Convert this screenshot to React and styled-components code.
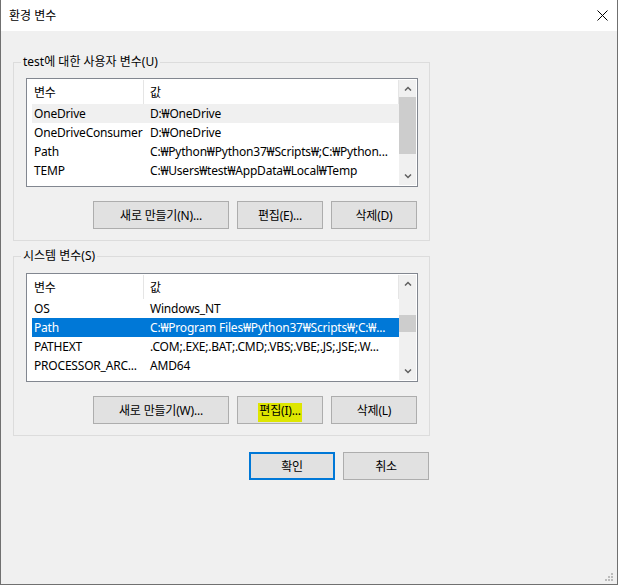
import React from "react";
import styled, { createGlobalStyle } from "styled-components";

const GlobalStyle = createGlobalStyle`
  html, body { margin: 0; padding: 0; background: #f0f0f0; }
  body {
    font-family: "Noto Sans", "Noto Sans CJK KR", sans-serif;
    font-size: 12px;
    color: #000;
  }
  * { box-sizing: border-box; }
`;

const Window = styled.div`
  position: relative;
  width: 618px;
  height: 585px;
  background: #f0f0f0;
  border-left: 1px solid #707070;
  border-right: 1px solid #707070;
  border-bottom: 1px solid #707070;
  display: flex;
  flex-direction: column;
  overflow: hidden;
`;

const TitleBar = styled.div`
  height: 31px;
  flex: none;
  background: #fff;
  display: flex;
  align-items: center;
  justify-content: space-between;
  padding: 0 9px 0 8px;
`;

const Title = styled.span`
  font-size: 12px;
  line-height: 16px;
`;

const Content = styled.div`
  display: flex;
  flex-direction: column;
  padding-left: 12px;
`;

const Group = styled.div`
  position: relative;
  width: 417px;
  margin-top: ${(p) => p.$mt}px;
  border: 1px solid #dcdcdc;
  padding: ${(p) => p.$pt}px 11px 11px 12px;
  display: flex;
  flex-direction: column;
`;

const GroupLabel = styled.span`
  position: absolute;
  top: -9px;
  left: 7px;
  padding: 0 2px;
  background: #f0f0f0;
  line-height: 16px;
  white-space: nowrap;
`;

const ListBox = styled.div`
  height: 109px;
  border: 1px solid #828790;
  background: #fff;
  padding: 1px;
  display: flex;
`;

const TableArea = styled.div`
  flex: 1;
  min-width: 0;
  padding-left: 4px;
  overflow: hidden;
  letter-spacing: -0.2px;
`;

const HeaderRow = styled.div`
  display: flex;
  height: 24px;
  align-items: stretch;
`;

const HeaderCell = styled.div`
  width: ${(p) => p.$w}px;
  flex: none;
  border-right: 1px solid #e5e5e5;
  padding-left: ${(p) => p.$pl}px;
  display: flex;
  align-items: center;
  white-space: nowrap;
`;

const Row = styled.div`
  display: flex;
  height: 19px;
  align-items: center;
  background: ${(p) => (p.$sel ? "#0078d7" : p.$hover ? "#f0f0f0" : "transparent")};
  color: ${(p) => (p.$sel ? "#fff" : "#000")};
`;

const Cell = styled.div`
  width: ${(p) => p.$w}px;
  flex: none;
  padding-left: ${(p) => p.$pl}px;
  white-space: nowrap;
  overflow: hidden;
  line-height: 19px;
`;

const ScrollBar = styled.div`
  width: 17px;
  flex: none;
  background: #f0f0f0;
  display: flex;
  flex-direction: column;
`;

const ScrollBtn = styled.div`
  height: 17px;
  flex: none;
  display: flex;
  align-items: center;
  justify-content: center;
`;

const Track = styled.div`
  flex: 1;
  display: flex;
  flex-direction: column;
`;

const Thumb = styled.div`
  margin-top: ${(p) => p.$top}px;
  height: ${(p) => p.$h}px;
  background: #cdcdcd;
`;

const ButtonRow = styled.div`
  display: flex;
  justify-content: flex-end;
  gap: 8px;
  margin-top: 14px;
  padding-right: 1px;
`;

const Button = styled.button`
  width: ${(p) => p.$w}px;
  height: 28px;
  flex: none;
  background: #e1e1e1;
  border: ${(p) => (p.$default ? "2px solid #0078d7" : "1px solid #adadad")};
  font-family: "Noto Sans", "Noto Sans CJK KR", sans-serif;
  font-size: 12px;
  letter-spacing: -0.2px;
  color: #000;
  padding: 0;
  display: flex;
  align-items: center;
  justify-content: center;
  white-space: nowrap;
`;

const Mark = styled.span`
  background: #dee600;
  padding: 1px 1px 4px 1px;
  margin-top: 5px;
  line-height: 14px;
`;

const DialogButtons = styled.div`
  width: 417px;
  display: flex;
  justify-content: flex-end;
  gap: 8px;
  margin-top: 16px;
  padding-right: 1px;
`;

const Grip = styled.svg`
  position: absolute;
  right: 3px;
  bottom: 2px;
`;

const Chevron = ({ up }) => (
  <svg width="8" height="5" viewBox="0 0 8 5">
    <polyline
      points={up ? "1,4.5 4,1.5 7,4.5" : "1,0.5 4,3.5 7,0.5"}
      fill="none"
      stroke="#606060"
      strokeWidth="1.5"
    />
  </svg>
);

const CloseIcon = () => (
  <svg width="11" height="11" viewBox="0 0 11 11">
    <path d="M0.5 0.5 L10.5 10.5 M10.5 0.5 L0.5 10.5" stroke="#000" strokeWidth="1" />
  </svg>
);

const C1 = 112;
const C2 = 255;

function VarList({ rows, thumbTop, thumbH }) {
  return (
    <ListBox>
      <TableArea>
        <HeaderRow>
          <HeaderCell $w={C1} $pl={2}>변수</HeaderCell>
          <HeaderCell $w={C2} $pl={6}>값</HeaderCell>
        </HeaderRow>
        {rows.map((r, i) => (
          <Row key={i} $sel={r.sel} $hover={r.hover}>
            <Cell $w={C1} $pl={2}>{r.n}</Cell>
            <Cell $w={C2} $pl={6}>{r.v}</Cell>
          </Row>
        ))}
      </TableArea>
      <ScrollBar>
        <ScrollBtn><Chevron up /></ScrollBtn>
        <Track>
          <Thumb $top={thumbTop} $h={thumbH} />
        </Track>
        <ScrollBtn><Chevron /></ScrollBtn>
      </ScrollBar>
    </ListBox>
  );
}

const userRows = [
  { n: "OneDrive", v: "D:₩OneDrive", hover: true },
  { n: "OneDriveConsumer", v: "D:₩OneDrive" },
  { n: "Path", v: "C:₩Python₩Python37₩Scripts₩;C:₩Python..." },
  { n: "TEMP", v: "C:₩Users₩test₩AppData₩Local₩Temp" },
];

const sysRows = [
  { n: "OS", v: "Windows_NT" },
  { n: "Path", v: "C:₩Program Files₩Python37₩Scripts₩;C:₩...", sel: true },
  { n: "PATHEXT", v: ".COM;.EXE;.BAT;.CMD;.VBS;.VBE;.JS;.JSE;.W..." },
  { n: "PROCESSOR_ARC...", v: "AMD64" },
];

export default function App() {
  return (
    <>
      <GlobalStyle />
      <Window>
        <TitleBar>
          <Title>환경 변수</Title>
          <CloseIcon />
        </TitleBar>
        <Content>
          <Group $mt={31} $pt={15}>
            <GroupLabel>test에 대한 사용자 변수(U)</GroupLabel>
            <VarList rows={userRows} thumbTop={0} thumbH={57} />
            <ButtonRow>
              <Button $w={136}>새로 만들기(N)...</Button>
              <Button $w={86}>편집(E)...</Button>
              <Button $w={86}>삭제(D)</Button>
            </ButtonRow>
          </Group>
          <Group $mt={15} $pt={16}>
            <GroupLabel>시스템 변수(S)</GroupLabel>
            <VarList rows={sysRows} thumbTop={23} thumbH={17} />
            <ButtonRow>
              <Button $w={136}>새로 만들기(W)...</Button>
              <Button $w={86}><Mark>편집(I)...</Mark></Button>
              <Button $w={86}>삭제(L)</Button>
            </ButtonRow>
          </Group>
          <DialogButtons>
            <Button $w={86} $default>확인</Button>
            <Button $w={86}>취소</Button>
          </DialogButtons>
        </Content>
        <Grip width="9" height="9" viewBox="0 0 9 9">
          <rect x="6" y="0" width="2" height="2" fill="#bcbcbc" />
          <rect x="3" y="3" width="2" height="2" fill="#bcbcbc" />
          <rect x="6" y="3" width="2" height="2" fill="#bcbcbc" />
          <rect x="0" y="6" width="2" height="2" fill="#bcbcbc" />
          <rect x="3" y="6" width="2" height="2" fill="#bcbcbc" />
          <rect x="6" y="6" width="2" height="2" fill="#bcbcbc" />
        </Grip>
      </Window>
    </>
  );
}
